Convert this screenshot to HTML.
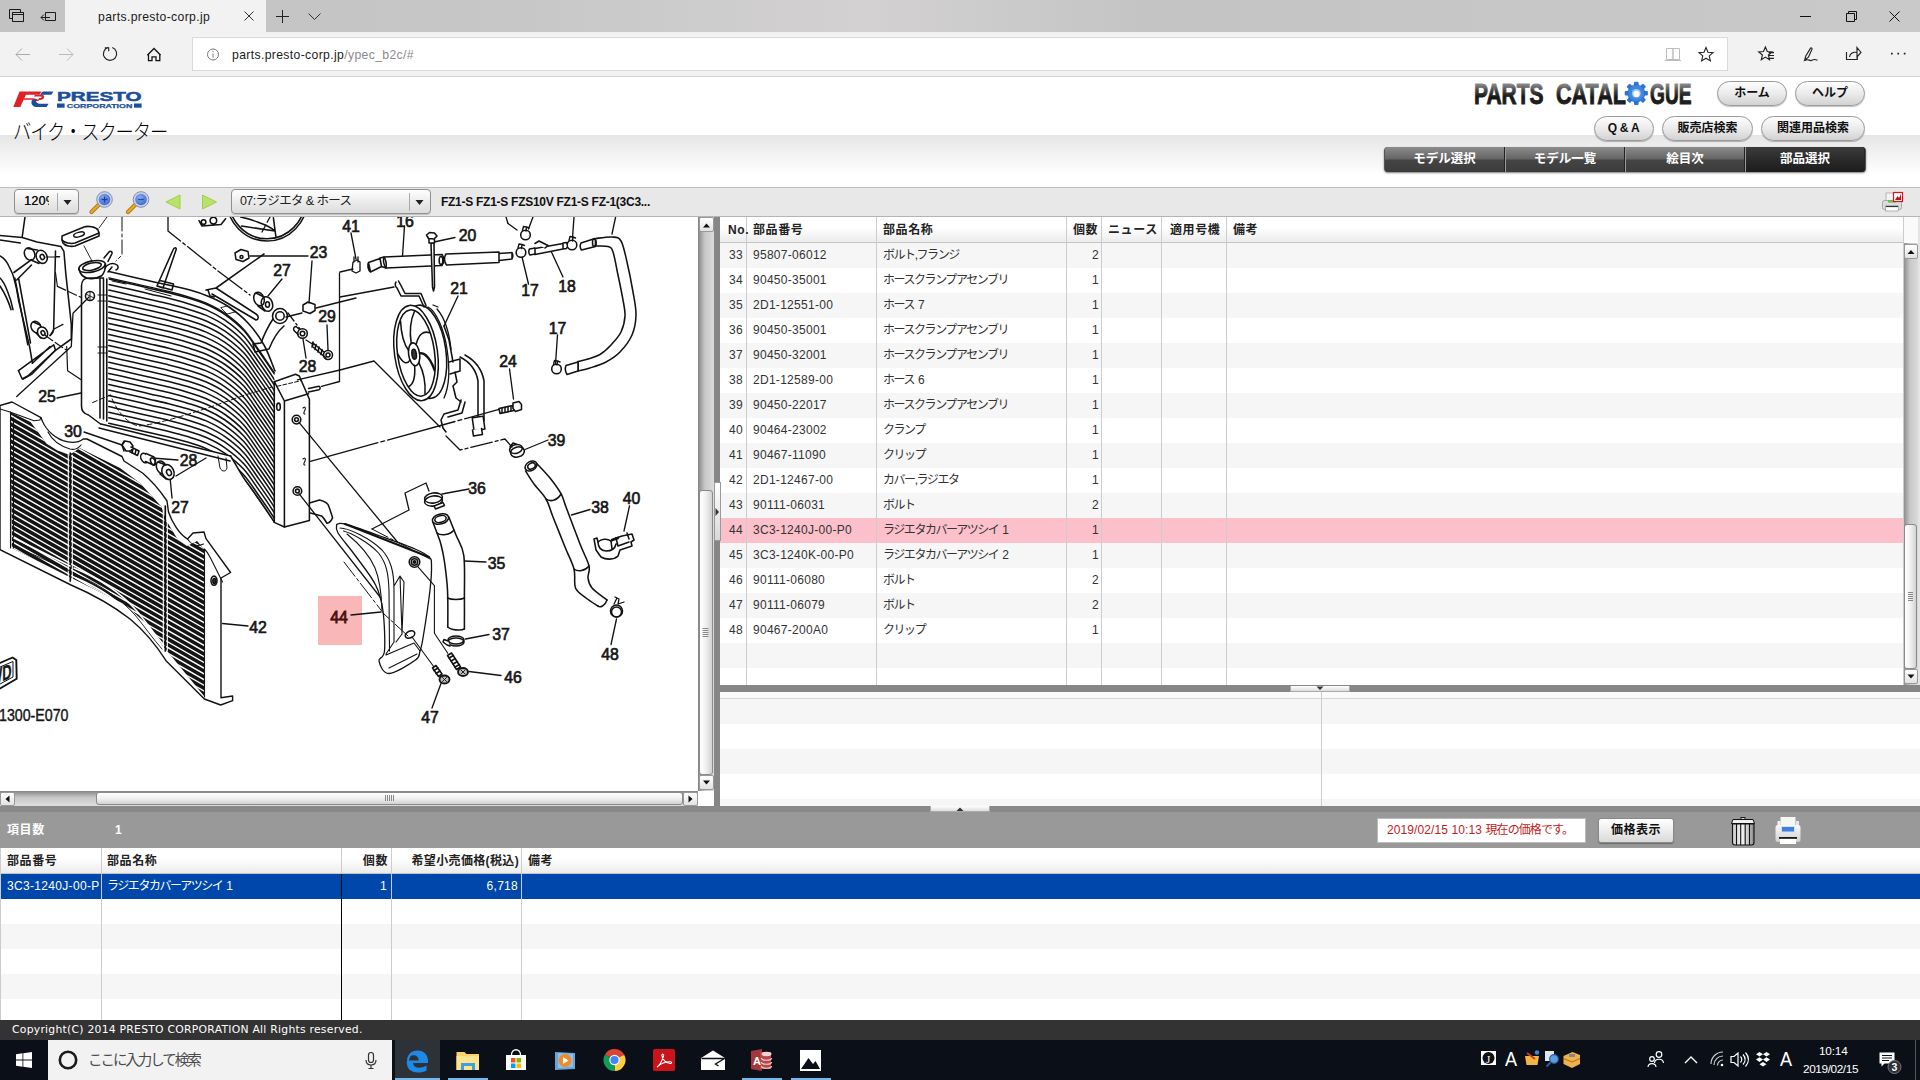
<!DOCTYPE html>
<html lang="ja">
<head>
<meta charset="utf-8">
<title>parts.presto-corp.jp</title>
<style>
*{box-sizing:border-box;margin:0;padding:0}
html,body{width:1920px;height:1080px;overflow:hidden;background:#fff}
body{position:relative;font-family:"Liberation Sans","Noto Sans CJK JP",sans-serif;font-size:12px;color:#222}
.abs{position:absolute}
svg{position:absolute;overflow:visible}
/* browser chrome */
#tabbar{left:0;top:0;width:1920px;height:32px;background:linear-gradient(90deg,#c3c3c3 0,#c6c6c6 25%,#d3d1d1 45%,#c4c4c4 60%,#c9c9c9 100%)}
#tab{left:65px;top:0;width:201px;height:33px;background:#f2f2f2}
#navbar{left:0;top:32px;width:1920px;height:45px;background:#f2f2f2;border-bottom:1px solid #d2d2d2}
#urlbox{left:192px;top:37px;width:1536px;height:34px;background:#fff;border:1px solid #d9d9d9}
.ctext{font-size:12.2px;color:#1a1a1a;white-space:nowrap;letter-spacing:.36px}
/* page header */
#hgrad{left:0;top:135px;width:1920px;height:40px;background:linear-gradient(#e6e6e6,#fff)}
#title{left:13px;top:117px;font-size:21px;letter-spacing:-1.2px;transform:scaleX(.87);transform-origin:0 0;color:#000;white-space:nowrap;font-weight:300;line-height:30px}
.pill{height:25px;border:1px solid #9a9a9a;border-radius:13px;background:linear-gradient(#fdfdfd,#e9e9e9 55%,#d2d2d2);box-shadow:0 1px 1px rgba(0,0,0,.25);font-weight:bold;font-size:12px;text-align:center;line-height:23px;color:#111;white-space:nowrap}
.nav{top:147px;width:120px;height:25px;background:linear-gradient(#8c8c8c,#666 46%,#444 54%,#3c3c3c);color:#fff;font-weight:bold;font-size:12.5px;text-align:center;line-height:25px;border-left:1px solid #999;border-right:1px solid #222}
/* toolbar */
#toolbar{left:0;top:187px;width:1920px;height:30px;background:#e8e8e8;border-top:1px solid #bdbdbd;border-bottom:1px solid #b4b4b4}
.combo{top:189px;height:25px;border:1px solid #8f8f8f;border-radius:4px;background:linear-gradient(#fff,#ececec 50%,#dcdcdc);box-shadow:0 1px 0 rgba(0,0,0,.15);font-size:12.5px;line-height:23px;white-space:nowrap;overflow:hidden;color:#222}
.sbtn{background:linear-gradient(#fff,#e2e2e2);border:1px solid #999;border-radius:2px}
/* grids */
.hdr{background:linear-gradient(#fff,#fff 40%,#ececec);border-bottom:1px solid #c4c4c4;font-weight:bold;color:#222}
.vl{position:absolute;width:1px;background:#ccc}
.t{position:absolute;white-space:nowrap;line-height:25px;height:25px;font-size:12px;letter-spacing:.28px;color:#333}
.k{letter-spacing:-1.45px}
.hb{font-weight:bold;color:#222;letter-spacing:.6px;line-height:26px}
</style>
</head>
<body>
<!-- ============ BROWSER CHROME ============ -->
<div class="abs" id="tabbar"></div>
<div class="abs" id="tab"></div>
<div class="abs" id="navbar"></div>
<div class="abs" id="urlbox"></div>
<div class="abs ctext" style="left:98px;top:10px">parts.presto-corp.jp</div>
<div class="abs ctext" style="left:232px;top:47.500px">parts.presto-corp.jp<span style="color:#8a8a8a">/ypec_b2c/#</span></div>
<svg style="left:0;top:0" width="1920" height="77" viewBox="0 0 1920 77" fill="none" stroke="#1a1a1a" stroke-width="1">
<!-- tab tools -->
<path d="M9.5 9.5h11v9h-11zM12.5 12.5h11v9h-11z" fill="none"/><path d="M12.5 12.5h11v9h-11z" fill="#c5c5c5"/><path d="M12.5 14.5h11"/>
<path d="M45.5 12.5h10v8h-10zM41 17.5h9M44 14.5l-3 3 3 3"/>
<!-- close, plus, chevron -->
<path d="M244.5 11.5l9 9M253.5 11.5l-9 9" stroke="#333"/>
<path d="M282.5 10v13M276 16.500h13" stroke="#222"/>
<path d="M308.500 13.500l6 6 6-6" stroke="#333"/>
<!-- window controls -->
<path d="M1800 16.500h11M1846.500 13.500h8v8h-8zM1848.500 13.500v-2h8v8h-2M1889.500 11.500l10 10M1899.500 11.500l-10 10" stroke="#111"/>
<!-- nav -->
<path d="M16 54.500h14M22 48.500l-6 6 6 6" stroke="#aaa"/>
<path d="M59 54.500h14M67 48.500l6 6-6 6" stroke="#bbb"/>
<path d="M112.260 47.550A6.600 6.600 0 1 1 108.300 47.400M104.800 47.700h3.900v3.600" stroke="#222" stroke-width="1.150"/>
<path d="M147.300 55.200l6.700-6.700 6.700 6.700M148.500 54.500v6.100h3.500v-3.800h4v3.800h3.800v-6.100" stroke="#111" stroke-width="1.300"/>
<circle cx="213" cy="54.500" r="5.500" stroke="#777"/><path d="M213 53.500v4M213 51.200v1" stroke="#777"/>
<!-- reading / fav -->
<path d="M1666.500 48.500h6.500v11h-6.500zM1673 48.500h6.500v11h-6.500zM1665 60.500h16" stroke="#bdbdbd"/>
<path d="M1706 47.500l2 4.700 5 .4-3.800 3.300 1.200 5-4.400-2.700-4.400 2.700 1.200-5-3.800-3.300 5-.4z" stroke="#222" stroke-width="1.100"/>
<path d="M1765.400 47l1.900 4.500 4.800.4-3.700 3.100 1.100 4.700-4.100-2.600-4.100 2.600 1.100-4.700-3.700-3.100 4.800-.4zM1768.500 52.600h5.500M1768.500 55.500h5.500M1768.500 58.400h5.500" stroke="#222" stroke-width="1.150"/>
<path d="M1804.600 60.200l1.200-4.200 4.600-7.600c.6-.9 2-.2 1.600.9l-3.600 7.900zM1805 60.600c3-2.500 4.500.8 6.500-.2s2.500-1.800 6-.2" stroke="#222" stroke-width="1.150"/>
<path d="M1846.500 52v7.500h10.800v-2.500M1849.500 57c.5-3.500 3-5 7.500-5M1857 47.500l4 5-4 4.500z" stroke="#222" stroke-width="1.150"/>
<path d="M1891 53.700h1.700M1897.400 53.700h1.700M1903.800 53.700h1.700" stroke="#222" stroke-width="1.700"/>
</svg>


<!-- ============ PAGE HEADER ============ -->
<div class="abs" id="hgrad"></div>
<svg style="left:0;top:84px" width="160" height="30" viewBox="0 84 160 30">
<path d="M19.500 91.500h22l-2 3.200h-13.500l-1.700 3.600h8.500c3 0 5 .8 6.500 2.600l-3.200 0c-1-.9-2-1.100-3.800-1.100h-8.700l-3.300 7.200h-7z" fill="#e02227"/>
<path d="M35 94.700h6.500c2 0 3 1 2.600 2.600-.4 1.700-1.800 2.700-4 2.700h-2.100l1.200-2h1c.8 0 1.300-.3 1.400-.8.100-.5-.2-.8-1-.8h-6.600z" fill="#e02227"/>
<path d="M43.500 91.500h10l-2.200 3.200h-8.300c-1.500 0-2.700.5-3.600 1.500l2.500-4.200zM36 100.600c0 2 1.400 3.200 4 3.200h8.600l-2 3.200h-8.800c-4.500 0-6.800-2.400-6.300-5.600.1-.6.500-1.400.8-1.800h3.900c-.1.300-.2.700-.2 1z" fill="#1b4f9c"/>
<text x="57" y="100.600" font-family="Liberation Sans,sans-serif" font-weight="bold" font-size="12.300" fill="#1b4f9c" stroke="#1b4f9c" stroke-width=".5" textLength="84.500" lengthAdjust="spacingAndGlyphs">PRESTO</text>
<rect x="57" y="103.500" width="7.600" height="4.200" fill="#1b4f9c"/><rect x="134" y="103.500" width="7.600" height="4.200" fill="#1b4f9c"/>
<text x="66.800" y="107.700" font-family="Liberation Sans,sans-serif" font-weight="bold" font-size="5.800" fill="#1b4f9c" stroke="#1b4f9c" stroke-width=".25" textLength="65.500" lengthAdjust="spacingAndGlyphs">CORPORATION</text>
</svg>

<div class="abs" id="title">バイク・スクーター</div>
<svg style="left:1470px;top:78px" width="230" height="32" viewBox="1470 78 230 32">
<defs><linearGradient id="pcg" x1="0" y1="82" x2="0" y2="104" gradientUnits="userSpaceOnUse"><stop offset="0" stop-color="#a0a0a0"/><stop offset=".4" stop-color="#444"/><stop offset=".7" stop-color="#141414"/><stop offset="1" stop-color="#222"/></linearGradient></defs>
<g font-family="Liberation Sans,sans-serif" font-weight="bold" font-size="29.500" fill="url(#pcg)" stroke="url(#pcg)" stroke-width=".9">
<text x="1474" y="104" textLength="69.500" lengthAdjust="spacingAndGlyphs">PARTS</text>
<text x="1556" y="104" textLength="70" lengthAdjust="spacingAndGlyphs">CATAL</text>
<text x="1650" y="104" textLength="41.500" lengthAdjust="spacingAndGlyphs">GUE</text>
</g>
<g transform="translate(1636.300 93.300)">
<g fill="#2f74d0"><rect x="-2.300" y="-11.600" width="4.600" height="23.200" rx="1"/><rect x="-2.300" y="-11.600" width="4.600" height="23.200" rx="1" transform="rotate(45)"/><rect x="-2.300" y="-11.600" width="4.600" height="23.200" rx="1" transform="rotate(90)"/><rect x="-2.300" y="-11.600" width="4.600" height="23.200" rx="1" transform="rotate(135)"/></g>
<circle r="8.600" fill="#3b86e0"/><circle r="8.600" fill="none" stroke="#1f5fb8" stroke-width=".6"/><circle r="4.300" fill="#fff"/>
<text x="0" y="5.500" text-anchor="middle" font-family="Liberation Sans,sans-serif" font-weight="bold" font-size="15" fill="#5b9cea" fill-opacity=".55">O</text>
</g>
</svg>
<div class="abs pill" style="left:1717px;top:81px;width:70px">ホーム</div>
<div class="abs pill" style="left:1795px;top:81px;width:70px">ヘルプ</div>
<div class="abs pill" style="left:1594px;top:116px;width:60px;letter-spacing:2.600px;text-indent:2px">Q&amp;A</div>
<div class="abs pill" style="left:1662px;top:116px;width:91px">販売店検索</div>
<div class="abs pill" style="left:1761px;top:116px;width:104px">関連用品検索</div>
<div class="abs" style="left:1384px;top:147px;width:482px;height:25px;border-radius:4px;background:#555;box-shadow:0 1px 2px rgba(0,0,0,.5)"></div>
<div class="abs nav" style="left:1385px;border-radius:3px 0 0 3px;border-left:0">モデル選択</div>
<div class="abs nav" style="left:1505px">モデル一覧</div>
<div class="abs nav" style="left:1625px">絵目次</div>
<div class="abs nav" style="left:1745px;border-radius:0 3px 3px 0;background:linear-gradient(#3c3c3c,#2a2a2a 50%,#1c1c1c)">部品選択</div>


<!-- ============ TOOLBAR ============ -->
<div class="abs" id="toolbar"></div>
<div class="abs combo" style="left:14px;width:65px;padding-left:9px;letter-spacing:.3px;color:#111;text-shadow:.3px 0 0 #111"><span style="display:inline-block;width:25px;overflow:hidden;vertical-align:top">120%</span></div>
<div class="abs" style="left:57px;top:193px;width:1px;height:18px;background:#aaa"></div>
<div class="abs combo" style="left:231px;width:200px;padding-left:8px;letter-spacing:-.6px">07:ラジエタ &amp; ホース</div>
<div class="abs" style="left:409px;top:193px;width:1px;height:18px;background:#aaa"></div>
<svg style="left:0;top:187px" width="480" height="30" viewBox="0 187 480 30">
<defs><radialGradient id="lens" cx=".4" cy=".35" r=".7"><stop offset="0" stop-color="#8aaef0"/><stop offset="1" stop-color="#3f66c8"/></radialGradient></defs>
<path d="M63.500 200h8l-4 5z" fill="#222"/><path d="M415.500 200h8l-4 5z" fill="#222"/>
<g id="mag"><path d="M91.500 212l8-8" stroke="#b07a10" stroke-width="4.200" stroke-linecap="round"/><path d="M91.500 212l8-8" stroke="#e8a92c" stroke-width="2.400" stroke-linecap="round"/>
<circle cx="104.500" cy="199.500" r="7.800" fill="#c9d4ea" stroke="#7f8fb5" stroke-width="1"/><circle cx="104.500" cy="199.500" r="5.800" fill="url(#lens)"/></g>
<path d="M101.500 199.500h6M104.500 196.500v6" stroke="#1c3f9e" stroke-width="1.300"/>
<g transform="translate(36.500 0)"><path d="M91.500 212l8-8" stroke="#b07a10" stroke-width="4.200" stroke-linecap="round"/><path d="M91.500 212l8-8" stroke="#e8a92c" stroke-width="2.400" stroke-linecap="round"/>
<circle cx="104.500" cy="199.500" r="7.800" fill="#c9d4ea" stroke="#7f8fb5" stroke-width="1"/><circle cx="104.500" cy="199.500" r="5.800" fill="url(#lens)"/></g>
<path d="M138 199.500h6" stroke="#2a4fb0" stroke-width="1.300"/>
<path d="M166 202l14-7v14z" fill="#b9e26a" stroke="#9fcf4c" stroke-width="1" stroke-linejoin="round"/>
<path d="M216.500 202l-14-7v14z" fill="#b9e26a" stroke="#9fcf4c" stroke-width="1" stroke-linejoin="round"/>
</svg>
<div class="abs" style="left:441px;top:190px;font-size:12px;font-weight:bold;line-height:24px;color:#111;white-space:nowrap;letter-spacing:-.27px">FZ1-S FZ1-S FZS10V FZ1-S FZ-1(3C3...</div>
<svg style="left:1880px;top:190px" width="26" height="24" viewBox="1880 190 26 24">
<rect x="1886" y="193" width="12" height="9" fill="#f4f4f4" stroke="#aaa" stroke-width=".8"/>
<rect x="1882.500" y="200.500" width="19" height="9" rx="2" fill="#dcdcdc" stroke="#999" stroke-width=".8"/>
<rect x="1888" y="200" width="8" height="2.500" fill="#6cc04a"/>
<rect x="1885.500" y="206" width="13" height="5" fill="#fff" stroke="#888" stroke-width=".6"/><path d="M1886 206.500h12" stroke="#333" stroke-width="1.200"/>
<rect x="1893.500" y="192.500" width="9" height="9" fill="#fff" stroke="#e01020" stroke-width="1.200"/><path d="M1895 200l2.500-4 1.500 2 2-4v6z" fill="#c01020"/>
</svg>


<!-- ============ DIAGRAM ============ -->
<!--DG-START-->
<svg style="left:0;top:217px" width="698" height="574" viewBox="0 217 698 574">
<defs><clipPath id="dclip"><rect x="0" y="217" width="698" height="574"/></clipPath>
<clipPath id="core"><path d="M108.8 277.8C112.5 278.6 124.4 281.3 131.3 282.9C138.2 284.5 143.8 285.8 150 287.2C156.2 288.6 162.6 289.9 168.8 291.5C175.1 293.1 181.2 294.7 187.5 296.6C193.8 298.5 200.1 300.3 206.3 303.1C212.6 305.9 218.8 309 225 313.4C231.2 317.8 238.2 323.3 243.8 329.4C249.4 335.5 255 344.7 258.8 350C262.6 355.3 263.9 357.2 266.5 361C269.1 364.8 273.2 371 274.5 373L274.3 523L262.5 506L243.8 479L230.6 456L101 424z"/></clipPath>
<clipPath id="gr"><path d="M10.2 412L30.5 422L37 430.5L46.3 443.5L57.4 450.5L68.5 454.6L73 452.8L79.6 448L120 468L140 483L161.5 506.7L166 520L178 540L187 546L197 541L204 549L204 696L163 646L148 625L124 604L71 577.8L11.9 548z"/></clipPath>
</defs>
<g clip-path="url(#dclip)" fill="none" stroke="#121212" stroke-width="1.55" stroke-linecap="round" stroke-linejoin="round">
<rect x="0" y="217" width="698" height="574" fill="#fff" stroke="none"/>
<rect x="318" y="596" width="44" height="49" fill="#f9b7b7" stroke="none"/>
<g clip-path="url(#core)" stroke-width="1.55"><path d="M108.8 279C112.5 279.9 124.4 282.5 131.3 284.1C138.2 285.7 143.8 287 150 288.4C156.2 289.8 162.6 291.1 168.8 292.7C175.1 294.3 181.2 295.9 187.5 297.8C193.8 299.7 200.1 301.5 206.3 304.3C212.6 307.1 218.8 310.2 225 314.6C231.2 319 238.2 324.5 243.8 330.6C249.4 336.7 255 345.9 258.8 351.2C262.6 356.5 263.9 358.4 266.5 362.2C269.1 366 273.2 372.2 274.5 374.2M108.8 284.6C112.5 285.4 124.4 288.1 131.3 289.6C138.2 291.2 143.8 292.5 150 293.9C156.2 295.4 162.6 296.7 168.8 298.2C175.1 299.8 181.2 301.4 187.5 303.4C193.8 305.3 200.1 307.1 206.3 309.9C212.6 312.7 218.8 315.8 225 320.1C231.2 324.5 238.2 330 243.8 336.1C249.4 342.2 255 351.5 258.8 356.8C262.6 362 263.9 363.9 266.5 367.8C269.1 371.6 273.2 377.8 274.5 379.8M108.8 290.1C112.5 291 124.4 293.6 131.3 295.2C138.2 296.8 143.8 298.1 150 299.5C156.2 300.9 162.6 302.2 168.8 303.8C175.1 305.4 181.2 307 187.5 308.9C193.8 310.8 200.1 312.6 206.3 315.4C212.6 318.2 218.8 321.3 225 325.7C231.2 330.1 238.2 335.6 243.8 341.7C249.4 347.8 255 357 258.8 362.3C262.6 367.6 263.9 369.5 266.5 373.3C269.1 377.1 273.2 383.3 274.5 385.3M108.8 295.7C112.5 296.5 124.4 299.2 131.3 300.8C138.2 302.3 143.8 303.6 150 305.1C156.2 306.5 162.6 307.8 168.8 309.4C175.1 310.9 181.2 312.5 187.5 314.5C193.8 316.4 200.1 318.2 206.3 321C212.6 323.8 218.8 326.9 225 331.2C231.2 335.6 238.2 341.1 243.8 347.2C249.4 353.4 255 362.6 258.8 367.9C262.6 373.1 263.9 375 266.5 378.9C269.1 382.7 273.2 388.9 274.5 390.9M108.8 301.2C112.5 302 124.4 304.7 131.3 306.3C138.2 307.9 143.8 309.2 150 310.6C156.2 312 162.6 313.3 168.8 314.9C175.1 316.5 181.2 318.1 187.5 320C193.8 321.9 200.1 323.7 206.3 326.5C212.6 329.3 218.8 332.4 225 336.8C231.2 341.2 238.2 346.7 243.8 352.8C249.4 358.9 255 368.1 258.8 373.4C262.6 378.7 263.9 380.6 266.5 384.4C269.1 388.2 273.2 394.4 274.5 396.4M108.8 306.8C112.5 307.6 124.4 310.3 131.3 311.8C138.2 313.4 143.8 314.7 150 316.1C156.2 317.6 162.6 318.9 168.8 320.4C175.1 322 181.2 323.6 187.5 325.6C193.8 327.5 200.1 329.2 206.3 332.1C212.6 334.9 218.8 338 225 342.3C231.2 346.7 238.2 352.2 243.8 358.3C249.4 364.4 255 373.7 258.8 378.9C262.6 384.2 263.9 386.1 266.5 389.9C269.1 393.8 273.2 399.9 274.5 401.9M108.8 312.3C112.5 313.1 124.4 315.8 131.3 317.4C138.2 319 143.8 320.3 150 321.7C156.2 323.1 162.6 324.4 168.8 326C175.1 327.6 181.2 329.2 187.5 331.1C193.8 333 200.1 334.8 206.3 337.6C212.6 340.4 218.8 343.5 225 347.9C231.2 352.3 238.2 357.8 243.8 363.9C249.4 370 255 379.2 258.8 384.5C262.6 389.8 263.9 391.7 266.5 395.5C269.1 399.3 273.2 405.5 274.5 407.5M108.8 317.9C112.5 318.7 124.4 321.4 131.3 322.9C138.2 324.5 143.8 325.8 150 327.2C156.2 328.7 162.6 330 168.8 331.6C175.1 333.1 181.2 334.7 187.5 336.7C193.8 338.6 200.1 340.4 206.3 343.2C212.6 346 218.8 349.1 225 353.4C231.2 357.8 238.2 363.3 243.8 369.4C249.4 375.6 255 384.8 258.8 390.1C262.6 395.3 263.9 397.2 266.5 401.1C269.1 404.9 273.2 411.1 274.5 413.1M108.8 323.4C112.5 324.2 124.4 326.9 131.3 328.5C138.2 330.1 143.8 331.4 150 332.8C156.2 334.2 162.6 335.5 168.8 337.1C175.1 338.7 181.2 340.3 187.5 342.2C193.8 344.1 200.1 345.9 206.3 348.7C212.6 351.5 218.8 354.6 225 359C231.2 363.4 238.2 368.9 243.8 375C249.4 381.1 255 390.3 258.8 395.6C262.6 400.9 263.9 402.8 266.5 406.6C269.1 410.4 273.2 416.6 274.5 418.6M108.8 328.9C112.5 329.8 124.4 332.5 131.3 334C138.2 335.6 143.8 336.9 150 338.3C156.2 339.8 162.6 341.1 168.8 342.6C175.1 344.2 181.2 345.8 187.5 347.8C193.8 349.7 200.1 351.4 206.3 354.2C212.6 357.1 218.8 360.2 225 364.5C231.2 368.9 238.2 374.4 243.8 380.5C249.4 386.6 255 395.9 258.8 401.1C262.6 406.4 263.9 408.3 266.5 412.1C269.1 416 273.2 422.1 274.5 424.1M108.8 334.5C112.5 335.4 124.4 338 131.3 339.6C138.2 341.2 143.8 342.5 150 343.9C156.2 345.3 162.6 346.6 168.8 348.2C175.1 349.8 181.2 351.4 187.5 353.3C193.8 355.2 200.1 357 206.3 359.8C212.6 362.6 218.8 365.7 225 370.1C231.2 374.5 238.2 380 243.8 386.1C249.4 392.2 255 401.4 258.8 406.7C262.6 412 263.9 413.9 266.5 417.7C269.1 421.5 273.2 427.7 274.5 429.7M108.8 340.1C112.5 340.9 124.4 343.6 131.3 345.1C138.2 346.7 143.8 348 150 349.4C156.2 350.9 162.6 352.2 168.8 353.8C175.1 355.3 181.2 356.9 187.5 358.9C193.8 360.8 200.1 362.6 206.3 365.4C212.6 368.2 218.8 371.3 225 375.6C231.2 380 238.2 385.5 243.8 391.6C249.4 397.8 255 407 258.8 412.2C262.6 417.5 263.9 419.4 266.5 423.2C269.1 427.1 273.2 433.2 274.5 435.2M108.8 345.6C112.5 346.5 124.4 349.1 131.3 350.7C138.2 352.3 143.8 353.6 150 355C156.2 356.4 162.6 357.7 168.8 359.3C175.1 360.9 181.2 362.5 187.5 364.4C193.8 366.3 200.1 368.1 206.3 370.9C212.6 373.7 218.8 376.8 225 381.2C231.2 385.6 238.2 391.1 243.8 397.2C249.4 403.3 255 412.5 258.8 417.8C262.6 423.1 263.9 425 266.5 428.8C269.1 432.6 273.2 438.8 274.5 440.8M108.8 351.1C112.5 352 124.4 354.7 131.3 356.2C138.2 357.8 143.8 359.1 150 360.5C156.2 362 162.6 363.3 168.8 364.9C175.1 366.4 181.2 368 187.5 370C193.8 371.9 200.1 373.7 206.3 376.5C212.6 379.3 218.8 382.4 225 386.8C231.2 391.1 238.2 396.6 243.8 402.8C249.4 408.9 255 418.1 258.8 423.4C262.6 428.6 263.9 430.5 266.5 434.4C269.1 438.2 273.2 444.4 274.5 446.4M108.8 356.7C112.5 357.6 124.4 360.2 131.3 361.8C138.2 363.4 143.8 364.7 150 366.1C156.2 367.5 162.6 368.8 168.8 370.4C175.1 372 181.2 373.6 187.5 375.5C193.8 377.4 200.1 379.2 206.3 382C212.6 384.8 218.8 387.9 225 392.3C231.2 396.7 238.2 402.2 243.8 408.3C249.4 414.4 255 423.6 258.8 428.9C262.6 434.2 263.9 436.1 266.5 439.9C269.1 443.7 273.2 449.9 274.5 451.9M108.8 362.2C112.5 363.1 124.4 365.8 131.3 367.3C138.2 368.9 143.8 370.2 150 371.6C156.2 373.1 162.6 374.4 168.8 375.9C175.1 377.5 181.2 379.1 187.5 381.1C193.8 383 200.1 384.8 206.3 387.6C212.6 390.4 218.8 393.5 225 397.8C231.2 402.2 238.2 407.7 243.8 413.8C249.4 419.9 255 429.2 258.8 434.4C262.6 439.7 263.9 441.6 266.5 445.4C269.1 449.3 273.2 455.4 274.5 457.4M108.8 367.8C112.5 368.6 124.4 371.3 131.3 372.9C138.2 374.5 143.8 375.8 150 377.2C156.2 378.6 162.6 379.9 168.8 381.5C175.1 383.1 181.2 384.7 187.5 386.6C193.8 388.5 200.1 390.3 206.3 393.1C212.6 395.9 218.8 399 225 403.4C231.2 407.8 238.2 413.3 243.8 419.4C249.4 425.5 255 434.7 258.8 440C262.6 445.3 263.9 447.2 266.5 451C269.1 454.8 273.2 461 274.5 463M108.8 373.4C112.5 374.2 124.4 376.9 131.3 378.4C138.2 380 143.8 381.3 150 382.8C156.2 384.2 162.6 385.5 168.8 387.1C175.1 388.6 181.2 390.2 187.5 392.2C193.8 394.1 200.1 395.9 206.3 398.7C212.6 401.5 218.8 404.6 225 408.9C231.2 413.3 238.2 418.8 243.8 424.9C249.4 431.1 255 440.3 258.8 445.6C262.6 450.8 263.9 452.7 266.5 456.6C269.1 460.4 273.2 466.6 274.5 468.6M108.8 378.9C112.5 379.8 124.4 382.4 131.3 384C138.2 385.6 143.8 386.9 150 388.3C156.2 389.7 162.6 391 168.8 392.6C175.1 394.2 181.2 395.8 187.5 397.7C193.8 399.6 200.1 401.4 206.3 404.2C212.6 407 218.8 410.1 225 414.5C231.2 418.9 238.2 424.4 243.8 430.5C249.4 436.6 255 445.8 258.8 451.1C262.6 456.4 263.9 458.3 266.5 462.1C269.1 465.9 273.2 472.1 274.5 474.1M108.8 384.5C112.5 385.3 124.4 388 131.3 389.5C138.2 391.1 143.8 392.4 150 393.9C156.2 395.3 162.6 396.6 168.8 398.1C175.1 399.7 181.2 401.3 187.5 403.2C193.8 405.2 200.1 406.9 206.3 409.8C212.6 412.6 218.8 415.7 225 420C231.2 424.4 238.2 429.9 243.8 436C249.4 442.1 255 451.4 258.8 456.6C262.6 461.9 263.9 463.8 266.5 467.6C269.1 471.5 273.2 477.6 274.5 479.6M108.8 390C112.5 390.9 124.4 393.5 131.3 395.1C138.2 396.7 143.8 398 150 399.4C156.2 400.8 162.6 402.1 168.8 403.7C175.1 405.3 181.2 406.9 187.5 408.8C193.8 410.7 200.1 412.5 206.3 415.3C212.6 418.1 218.8 421.2 225 425.6C231.2 430 238.2 435.5 243.8 441.6C249.4 447.7 255 456.9 258.8 462.2C262.6 467.5 263.9 469.4 266.5 473.2C269.1 477 273.2 483.2 274.5 485.2M108.8 395.6C112.5 396.4 124.4 399.1 131.3 400.6C138.2 402.2 143.8 403.5 150 404.9C156.2 406.4 162.6 407.7 168.8 409.2C175.1 410.8 181.2 412.4 187.5 414.4C193.8 416.3 200.1 418.1 206.3 420.9C212.6 423.7 218.8 426.8 225 431.1C231.2 435.5 238.2 441 243.8 447.1C249.4 453.2 255 462.5 258.8 467.8C262.6 473 263.9 474.9 266.5 478.8C269.1 482.6 273.2 488.8 274.5 490.8M108.8 401.1C112.5 402 124.4 404.6 131.3 406.2C138.2 407.8 143.8 409.1 150 410.5C156.2 411.9 162.6 413.2 168.8 414.8C175.1 416.4 181.2 418 187.5 419.9C193.8 421.8 200.1 423.6 206.3 426.4C212.6 429.2 218.8 432.3 225 436.7C231.2 441.1 238.2 446.6 243.8 452.7C249.4 458.8 255 468 258.8 473.3C262.6 478.6 263.9 480.5 266.5 484.3C269.1 488.1 273.2 494.3 274.5 496.3M108.8 406.6C112.5 407.5 124.4 410.2 131.3 411.8C138.2 413.3 143.8 414.6 150 416C156.2 417.5 162.6 418.8 168.8 420.4C175.1 421.9 181.2 423.5 187.5 425.5C193.8 427.4 200.1 429.2 206.3 432C212.6 434.8 218.8 437.9 225 442.2C231.2 446.6 238.2 452.1 243.8 458.2C249.4 464.4 255 473.6 258.8 478.9C262.6 484.1 263.9 486 266.5 489.9C269.1 493.7 273.2 499.9 274.5 501.9M108.8 412.2C112.5 413 124.4 415.7 131.3 417.3C138.2 418.9 143.8 420.2 150 421.6C156.2 423 162.6 424.3 168.8 425.9C175.1 427.5 181.2 429.1 187.5 431C193.8 432.9 200.1 434.7 206.3 437.5C212.6 440.3 218.8 443.4 225 447.8C231.2 452.2 238.2 457.7 243.8 463.8C249.4 469.9 255 479.1 258.8 484.4C262.6 489.7 263.9 491.6 266.5 495.4C269.1 499.2 273.2 505.4 274.5 507.4M108.8 417.8C112.5 418.6 124.4 421.3 131.3 422.8C138.2 424.4 143.8 425.7 150 427.1C156.2 428.6 162.6 429.9 168.8 431.4C175.1 433 181.2 434.6 187.5 436.6C193.8 438.5 200.1 440.2 206.3 443.1C212.6 445.9 218.8 449 225 453.3C231.2 457.7 238.2 463.2 243.8 469.3C249.4 475.4 255 484.7 258.8 489.9C262.6 495.2 263.9 497.1 266.5 500.9C269.1 504.8 273.2 511 274.5 513M108.8 423.3C112.5 424.1 124.4 426.8 131.3 428.4C138.2 430 143.8 431.3 150 432.7C156.2 434.1 162.6 435.4 168.8 437C175.1 438.6 181.2 440.2 187.5 442.1C193.8 444 200.1 445.8 206.3 448.6C212.6 451.4 218.8 454.5 225 458.9C231.2 463.3 238.2 468.8 243.8 474.9C249.4 481 255 490.2 258.8 495.5C262.6 500.8 263.9 502.7 266.5 506.5C269.1 510.3 273.2 516.5 274.5 518.5M108.8 428.9C112.5 429.7 124.4 432.4 131.3 433.9C138.2 435.5 143.8 436.8 150 438.2C156.2 439.7 162.6 441 168.8 442.5C175.1 444.1 181.2 445.7 187.5 447.6C193.8 449.6 200.1 451.3 206.3 454.1C212.6 456.9 218.8 460.1 225 464.4C231.2 468.8 238.2 474.3 243.8 480.4C249.4 486.5 255 495.8 258.8 501C262.6 506.3 263.9 508.2 266.5 512C269.1 515.9 273.2 522 274.5 524"/></g>
<path d="M108.8 277.8C112.5 278.6 124.4 281.3 131.3 282.9C138.2 284.5 143.8 285.8 150 287.2C156.2 288.6 162.6 289.9 168.8 291.5C175.1 293.1 181.2 294.7 187.5 296.6C193.8 298.5 200.1 300.3 206.3 303.1C212.6 305.9 218.8 309 225 313.4C231.2 317.8 238.2 323.3 243.8 329.4C249.4 335.5 255 344.7 258.8 350C262.6 355.3 263.9 357.2 266.5 361C269.1 364.8 273.2 371 274.5 373" stroke-width="1.3"/>
<path d="M109 271.5C115.8 273.1 136.5 277.9 150 281C163.5 284.1 180 287.3 190 290C200 292.7 203.5 294.2 210 297C216.5 299.8 222.7 302.7 229 307C235.3 311.3 242.2 316.7 248 323C253.8 329.3 259.5 337 264 345C268.5 353 273.2 366.7 275 371"/>
<path d="M81.5 286c0-5 3-8 7-8h15M81.5 286v120c0 5 3 8 7 9l12 9M100 278v140M103.5 279v140M106.8 279v142"/>
<path d="M101 424l129.6 32M99 428l131 33"/>
<circle cx="90" cy="296" r="4.5"/><path d="M86 294l8 4M90 291.5v9" stroke-width=".9"/>
<path d="M98 295h9M98 301h9M98 347h9M98 353h9" stroke-width=".9"/>
<path d="M274.3 381.7L295.6 374.3L299.3 376L309.4 399.3V520.5L284.4 527L274.3 522.4z" fill="#fff"/><path d="M284.4 401V527M274.3 381.7L284.4 401L308.5 393.7"/>
<path d="M277 386.3L301 380.7" stroke-dasharray="4 2" stroke-width="1"/>
<ellipse cx="278.5" cy="406.7" rx="1.8" ry="3.6"/><circle cx="296.5" cy="419.6" r="4.3"/><circle cx="296.5" cy="419.6" r="1.9"/><circle cx="297.4" cy="491" r="4.3"/><circle cx="297.4" cy="491" r="1.9"/>
<path d="M303 408c2-2 3 0 2 2s-2 4 0 4M303 459c2-2 3 0 2 2s-2 4 0 4" stroke-width="1.1"/>
<path d="M308.5 388.5l10.5-2.3c1.5.5 1.5 3 0 3.5l-10.5 2.3" fill="#fff"/>
<path d="M309.4 503L319.6 500C324 501 328 503 329 506.7L332.6 517.8C331 521 329 523 327 523.3C325 520 323 517 321.5 516L310.4 513"/>
<path d="M230.6 456c4 6 10 18 16 26s16 22 27.7 40"/>
<ellipse cx="92" cy="266.5" rx="13.5" ry="5.5" transform="rotate(-12 92 266.5)"/><ellipse cx="92" cy="266.5" rx="9.5" ry="3.5" transform="rotate(-12 92 266.5)"/>
<path d="M79 269c1 5 4 8 8 9M105.5 264c0 5-1 9-4 12M84 277c4 3 12 2 17-1"/>
<path d="M62 236l22-9c4-1.5 12 0 14 3l1 3-24 10c-4 1-11 0-13-3z"/><ellipse cx="79" cy="234.5" rx="5.5" ry="2.2" transform="rotate(-15 79 234.5)"/><path d="M62 240l1 3c2 3 8 4 12 3l24-10v-3"/>
<path d="M84 246l8 15M99 228l8-11" stroke-width=".9"/>
<path d="M104 258l5-6c1-1.5 3.5-.5 3 1.5l-4 8M105 268c2-4 8-6 12-3 2 2 1 4-1 5M108 272l4-5"/>
<path d="M122 217v38l-6 6" stroke-dasharray="14 3 3 3" stroke-width="1"/>
<path d="M157 286l16-36c1-3 4-3 3 0l-13 38zM157 286l15 4 1.5-6-13.5-3.5" />
<path d="M112 281l14 3M145 289l26 7" stroke-width="1"/>
<path d="M206 290l10-2 40 26c3 2 3 5 0 6l-44-26M208 290l2 6 4 1M216 288l48-34"/>
<path d="M221 308l6 6 8-2-7-6z" stroke-width=".9"/>
<circle cx="280" cy="316" r="7.5"/><circle cx="280" cy="316" r="4.2"/><path d="M273 319c-4 6-9 16-12 24l-8 1 2 8 14-3c4-10 9-18 15-23"/>
<path d="M25 217l-2.8 20M0 235.5l22.2 1.9 14.8 4.6 24 4.6 2.9 4.7 1.8 21.3 5.6 51.8v14.6l-15.8 11.3-27.7 25.7-5.6 3-3.7-8.3"/>
<path d="M0 240l20.4 3M55.5 251l-1.8 77c0 3-1.5 6-3.7 7.5M55.5 256.8h4"/>
<path d="M0 256c4 2 7 6 9.3 11 2 4 3.6 7 4.6 11 2 7 3.5 14 4.6 22l11.1 46.6 2.8 16.4M0 278c3 3 5.5 8 7.4 13 2.5 6 4.3 12 5.6 18.6M0 286c4 6 8 14 11 23.6"/>
<path d="M13.9 272.5l17.6-12.9M16.7 280l14.8-15M14.8 278l13 66.8M18.5 278l12 65"/>
<path d="M18.5 370.7l35.2-25.9 1.8 5.5-24 24.1-8.5 4.6M32.4 363.3l17.6-16.7"/>
<ellipse cx="29.6" cy="254" rx="5" ry="6.5" transform="rotate(-25 29.6 254)"/><path d="M27 248.5l10.5 1.5M31 260l8 3.5"/><ellipse cx="41.7" cy="256.8" rx="5.3" ry="6.8" transform="rotate(-25 41.7 256.8)" fill="#fff"/><ellipse cx="42.3" cy="257" rx="2" ry="2.6" transform="rotate(-25 42.3 257)"/>
<ellipse cx="36" cy="327" rx="4.8" ry="6" transform="rotate(-30 36 327)"/><path d="M33.5 322l6.5 3M36 333l5 5"/><ellipse cx="42.6" cy="332.7" rx="4.8" ry="6" transform="rotate(-30 42.6 332.7)" fill="#fff"/><ellipse cx="43" cy="333" rx="1.8" ry="2.4" transform="rotate(-30 43 333)"/>
<path d="M46 257h9M55.5 272.6l1.9 13.8" stroke-width="1.1"/>
<path d="M57.4 286.4l24.1 11.1M45.4 335.5l15.6 11.1 6 3.7" stroke-dasharray="9 3" stroke-width="1.2"/>
<path d="M89 297l-16 16.3-1.7 33.3-54.6 50" stroke-width="1.3"/>
<path d="M66.7 346.6l.9 24.1 13.9 9.3" stroke-width="1.2"/>
<path d="M50 335.5l4-6.5 9-4.6" stroke-width="1.2"/>
<path d="M235 253l6-3.5 7 2 1 6.5-6 3.5-7-2z"/><circle cx="241.5" cy="257" r="1.5"/>
<path d="M303 305l5-3 7 2.5 0 6-5 3-7-2.5z"/>
<ellipse cx="259" cy="299" rx="5" ry="7" transform="rotate(-20 259 299)"/><ellipse cx="267" cy="304" rx="5.5" ry="7.5" transform="rotate(-20 267 304)"/><ellipse cx="267.5" cy="304.5" rx="2" ry="2.8"/><path d="M256 293l8 4M258 306l7 5"/>
<circle cx="302.5" cy="333.5" r="4.8"/><circle cx="302.5" cy="333.5" r="2.3"/><path d="M299 329l-3-2.5c-2 0-3 2-2 4l4 4"/>
<circle cx="328" cy="355" r="4.5"/><circle cx="328" cy="355" r="2"/><path d="M324 352l-11-9M326 358l-13-11" /><path d="M313 342l-1 5M316 344.5l-1 5M319 347l-1 5M322 349.5l-1 5" stroke-width="1.6"/>
<ellipse cx="267" cy="199" rx="40.5" ry="42"/><ellipse cx="267" cy="199" rx="38.3" ry="39.8"/><path d="M241.5 226L275 231M273.4 217.8L276 237.5M240.6 217c4 1 9 2 13 3.6 8 3 16 5 21.4 10.4M199 220.6l3 5.4 19-1.6 4.6-5.7M203.6 222m-2.3 0a2.3 2.3 0 1 0 4.6 0a2.3 2.3 0 1 0-4.6 0M213.4 220.6m-3.3 0a3.3 3.3 0 1 0 6.6 0a3.3 3.3 0 1 0-6.6 0"/>
<path d="M353 262l4-2 3 2v9l-4 2-4-2zM354 262v-5M358 262v-5" stroke-width="1.3"/>
<g stroke-width="1.3">
<path d="M168 217v14l50 40 32 24" stroke-dasharray="30 3 3 3"/>
<path d="M262 232l8-15" stroke-dasharray="8 3"/>
<path d="M286 317l16-4M316 308l40-10" />
<path d="M340 272l13-3M339.5 273v108.5l-18 4.8" />
<path d="M297.4 379.8L340 370" />
<path d="M288 313l12 16M306 340l8 5" stroke-dasharray="10 3 2 3"/>
<path d="M340 370l34-9 66 66" />
<path d="M446 436l14 14 45-11 7 8" stroke-dasharray="22 3 3 3"/>
<path d="M340 297l54-10" />
<path d="M299 422.4L411 558.5" />
<path d="M299 493.7L384 602" />
<path d="M372 529l37-19-4-17 21-10 3 8" />
<path d="M310.4 461.3L499 409.4" stroke-dasharray="70 3 4 3"/>
<path d="M92.6 402.6L110.7 394.8C113 404 125 424 139 426C160 424 200 411 245.6 394.8L271.5 387" stroke-dasharray="5 3" stroke-width="1"/>
</g>
<g stroke-width="1.35">
<path d="M351 233L356 259"/>
<path d="M404.5 226L402.5 256"/>
<path d="M455 237.5L434 242"/>
<path d="M458 296L444 326"/>
<path d="M528.5 284L522 257"/>
<path d="M563 277L551 251"/>
<path d="M557.5 335L555.5 364"/>
<path d="M509.5 369L513.5 399"/>
<path d="M574 217L572.5 238"/>
<path d="M615.6 217L612 234"/>
<path d="M308 256L250 256"/>
<path d="M312 261L309 303"/>
<path d="M282 279L268 296"/>
<path d="M327 325L328 350"/>
<path d="M306 358L303 339"/>
<path d="M57 398L81 393"/>
<path d="M84 432L122 445"/>
<path d="M178 460L152 458"/>
<path d="M172 498L170 477"/>
<path d="M176 476L206 458"/>
<path d="M548 440L525 449.5"/>
<path d="M469 489L442 494"/>
<path d="M590 509.5L571.5 515"/>
<path d="M629.5 506L624 531"/>
<path d="M486 562L464.5 561"/>
<path d="M351 615L381 612"/>
<path d="M489 634.5L465.5 639"/>
<path d="M501 675.5L469 671.5"/>
<path d="M432 708L441 683.5"/>
<path d="M611 644.5L616.5 619"/>
<path d="M222.5 623.5L248 626"/>
<path d="M506 217L508 223.5"/>
<path d="M508 223.5L517 230"/>
<path d="M533 217L528.5 229"/>
</g>
<path d="M368.5 262.5l11.5-4 1.5 8-11 5.5zM368.5 262.5c-1.5 2-.5 8 2 9.5" fill="#fff"/>
<path d="M384 257l58-2.5c2.5 3 2.5 8 0 11l-56 2.5c-2.5-3-3-8-2-11z" fill="#fff"/><path d="M380 258l4-1M381.5 266.5l4.5 1.5M384 257c2 3 2.5 8 2 11"/>
<path d="M446 254l53-2v10.5l-52.5 2.5c-2.5-3-2.5-8-.5-11zM499 253.5l13-1v6.5l-13 1.5M512 252.5c1 2 1 4.5 0 6.5" fill="#fff"/>
<ellipse cx="441" cy="260.5" rx="1.8" ry="4"/>
<path d="M431 243l1.5 44 1 4 1-4-.5-44z" fill="#fff"/><path d="M426.5 235l3-2.5 5 .5 2.5 3-3 3-5.5-.5zM429 239v4h5.5v-3.5" fill="#fff"/>
<circle cx="521" cy="252.5" r="4.8" fill="#fff"/><path d="M518 248l1-4 3 .5-.5 4M522 244.5l2.5 1" stroke-width="1.4"/>
<circle cx="525.5" cy="235" r="4.8" fill="#fff"/><path d="M522.5 230.5l1-4 3 .5-.5 4M526.5 227l2.5 1" stroke-width="1.4"/>
<circle cx="572" cy="245" r="4.8" fill="#fff"/><path d="M569 240.5l1-4 3 .5-.5 4M573 237l2.5 1" stroke-width="1.4"/>
<circle cx="556.5" cy="369" r="4.8" fill="#fff"/><path d="M553.5 364.5l1-4 3 .5-.5 4M557.5 361l2.5 1" stroke-width="1.4"/>
<path d="M529.5 249l5.5-1v6l-5 1c-1.5-1.5-1.5-4.5-.500-6zM535 248.5l28-5v5.5l-28 5.5M563 243l3.5-.5c1 1.5 1 4.5 0 6l-3.5.500" fill="#fff"/><path d="M535 243.5l4-2.5 9 4.5-3 2.5" fill="#fff"/>
<path d="M596 238.5C598.7 238.2 607.8 236.6 612 237C616.2 237.4 618.5 236.8 621 241C623.5 245.2 625 253.5 627 262C629 270.5 631.5 283.2 633 292C634.5 300.8 636.2 307.8 636 315C635.8 322.2 634.7 328.8 632 335C629.3 341.2 624.3 347.5 620 352C615.7 356.5 611 359.3 606 362C601 364.7 594.7 366.5 590 368C585.3 369.5 580 370.5 578 371L578 361.5" />
<path d="M596 246C598 246.1 605.2 245.5 608 246.5C610.8 247.5 611.3 247.2 613 252C614.7 256.8 616.3 267 618 275C619.7 283 621.8 293.2 623 300C624.2 306.8 625.3 310.7 625 316C624.7 321.3 623.3 327.2 621 332C618.7 336.8 614.5 341.2 611 345C607.5 348.8 603.8 352.2 600 354.5C596.2 356.8 591.7 357.8 588 359C584.3 360.2 579.7 361.1 578 361.5"/>
<path d="M581 243l14-4.5c1.5 2 1.5 6 .5 8l-14 3.5c-1.5-2-1.5-5-.5-7z" fill="#fff"/><ellipse cx="594" cy="242.5" rx="1.5" ry="3.8"/>
<path d="M566 365.5l12-3.5v9l-11 3.5c-1.5-2.5-2-6.5-1-9z" fill="#fff"/>
<g transform="rotate(-8 416 353)">
<ellipse cx="425" cy="353" rx="21" ry="47" fill="#fff"/>
<ellipse cx="416" cy="353" rx="21.5" ry="48" fill="#fff" stroke-width="1.5"/><ellipse cx="416" cy="353" rx="18.5" ry="43.5"/>
<ellipse cx="414" cy="354" rx="5.5" ry="11.5"/><ellipse cx="414" cy="354" rx="2.2" ry="5" fill="#333"/>
<path d="M419.5 354Q428 355 431.8 373.4"/>
<path d="M417.5 362.9Q422.7 377.7 419.2 394.8"/>
<path d="M412.9 365.2Q411.7 382.5 404.3 385.2"/>
<path d="M409.1 359.2Q403.1 365.8 398 351.8"/>
<path d="M409 349.3Q403.4 339.9 405.1 319.2"/>
<path d="M412.6 342.9Q412.3 324.2 420.2 311.7"/>
<path d="M417.2 344.7Q423.2 330.1 432.3 334.8"/>
<path d="M419.5 353.4Q428 353.4 432.2 371.4"/>
</g>
<path d="M428 307c8 4 16 22 19 42 3 20 2 38-3 49M433 305l5 2M437 309c7 8 12 22 14 40" stroke-width="1.3"/>
<path d="M444 326l5 14 4 22M449 362l11-3v12l-10 3M455 372l2 10-4 4 3 12 5 4" />
<path d="M396 282c-1.5 2-.5 5 1 6l4 8h18l5 11M398.5 281l3 5.5 3.5 7h16l5 12" />
<path d="M460 357c8 4 16 12 18 24v40M465 355c9 5 17 14 19 26v40"/>
<path d="M461 400l-3 10-14 4-3 6 2 8 3 4M465 402l-3 11-14 4" />
<rect x="473" y="417" width="11" height="13" fill="#fff" transform="rotate(-8 478 423)"/><path d="M472.5 430l1 6 9-1.5-1-6" fill="#fff"/>
<path d="M499 408.5l14-3 1 5-14 3z" fill="#fff"/><path d="M502 408v5M505 407.3v5M508 406.6v5M511 406v5" stroke-width="1.5"/><path d="M513 403l6-1.5 2.5 3v5l-6 2-2.5-3z" fill="#fff"/>
<ellipse cx="517.5" cy="452" rx="7" ry="5" transform="rotate(-15 517.5 452)" fill="#fff"/><ellipse cx="516" cy="449" rx="6.5" ry="4.3" transform="rotate(-15 516 449)"/><path d="M510 447l3-4 3 1"/>
<ellipse cx="433.5" cy="498" rx="9" ry="5" transform="rotate(-8 433.5 498)" fill="#fff"/><ellipse cx="433.5" cy="501" rx="9" ry="5" transform="rotate(-8 433.5 501)"/><path d="M434 506l9-3.5 1.5 3-9 3.5z" fill="#fff"/>
<ellipse cx="456" cy="640" rx="8" ry="4" fill="#fff"/><ellipse cx="456" cy="642" rx="8" ry="4"/><path d="M448 641l-4-1.5-1 2.5 4 3 3 1" fill="#fff"/>
<circle cx="616.5" cy="611" r="6" fill="#fff"/><circle cx="616.5" cy="612" r="5"/><path d="M614 604l3-6 2 1-1 5 6-2M617 598l-2-1" stroke-width="1.3"/>
<path d="M525.6 471C527 473.2 530.6 479.3 534 484C537.4 488.7 542.8 493.5 546 499C549.2 504.5 549.8 509 553 517C556.2 525 561.5 538.3 565 547C568.5 555.7 572.2 562.2 574 569C575.8 575.8 573.5 583.2 575.5 588C577.5 592.8 582.2 595 586 598C589.8 601 596 604.7 598 606"/><path d="M537 463.7C539.2 466.1 546 473 550 478C554 483 558.3 488.9 561 493.7C563.7 498.5 562.8 498.6 566 507C569.2 515.4 576.2 534.2 580 544C583.8 553.8 587.7 560.3 589 566C590.3 571.7 587.5 574.3 588 578C588.5 581.7 588.8 584.3 592 588C595.2 591.7 604.5 598 607 600"/>
<ellipse cx="531" cy="466" rx="6.3" ry="4.5" transform="rotate(-30 531 466)" fill="#fff"/><ellipse cx="531.5" cy="466" rx="4" ry="2.8" transform="rotate(-30 531.5 466)"/>
<path d="M546 499c4 3 11 2 15-5M574 569c4 3 11 2 15-3M598 606c2 2 7 0 9-6"/>
<path d="M432.8 522C433.5 523.8 435.6 529.2 437 533C438.4 536.8 439.8 539.7 441 544.5C442.2 549.3 443.4 554.4 444.5 562C445.6 569.6 446.9 579.2 447.5 590C448.1 600.8 447.8 620.8 447.8 627"/><path d="M448.8 517C450 520 453.5 528.6 456 535C458.5 541.4 462.4 545.1 463.8 555.6C465.2 566.1 464.3 585.8 464.4 598C464.5 610.2 464.4 623.8 464.4 629"/><path d="M447.8 627c3 3 13 4 16.6 2M447.5 598c4 2 13 2 17 0M437 533c4 3 13 2 17-3"/>
<ellipse cx="440.5" cy="519" rx="8.3" ry="5" transform="rotate(-15 440.5 519)" fill="#fff"/><ellipse cx="440.5" cy="519" rx="5.8" ry="3.3" transform="rotate(-15 440.5 519)"/>
<path d="M594 539l3-1 1 4c3-3 9-4 13-1l5-3 6-2 10-2 2 6-3 2 1 4-12 4-2 6c-4 4-12 4-17 1l-5-7z" fill="#fff"/><path d="M598 542c0 5 3 9 8 9s9-2 10-7M611 541l1 8M616 538l2 8 11-4M627 533l2 6" /><path d="M612 540l6-2" stroke-width="2.4"/>
<path d="M336.7 524.5C338.1 524.4 337.8 522.1 345 524C352.2 525.9 368.3 531.8 380 536C391.7 540.2 406.8 545.5 415 549C423.2 552.5 426.2 554.3 429 557C431.8 559.7 431.3 559.5 431.5 565C431.7 570.5 431.4 577.8 430 590C428.6 602.2 424.7 627.8 423 638C421.3 648.2 421.2 647.3 420 651C418.8 654.7 420.7 656.2 415.5 660C410.3 663.8 395.1 673.3 389 673.5C382.9 673.7 379.8 664.8 379 661C378.2 657.2 383.8 659.3 384.5 651C385.2 642.7 384.5 622 383 611C381.5 600 380.2 594.2 375.6 585C371 575.8 361.9 564.7 355.6 556C349.3 547.3 341.1 538.2 338 533C334.9 527.8 336.9 525.9 336.7 524.5" fill="#fff" stroke-width="1.3"/>
<path d="M340 528c8 0 30 10 42 22 9 10 12 22 12 40v52l-8 12M343.5 531c8 2 26 12 35 22 8 10 10 21 10.5 38l.5 60M347 534c10 8 22 20 28 34 5 12 6.5 28 7 42M394 586l6-10 4 6-2 52-6 8M400 576l2 58M386 655l28-12 6 8M389 668l28-14" stroke-width="1.1"/>
<path d="M345 524l84 33" stroke-width="2"/>
<circle cx="414.5" cy="562" r="5.3" fill="#fff"/><circle cx="414.5" cy="562" r="3.2"/><circle cx="414.5" cy="562" r="1.2" fill="#222"/>
<ellipse cx="410" cy="634.5" rx="5" ry="3.3" transform="rotate(-25 410 634.5)" fill="#fff"/>
<path d="M417.8 566.7l16.6 19v47.6l13.4 20M412 637l22 30" stroke-width="1.1"/>
<path d="M372 529l58 30M344 562l40 52 24 22" stroke-dasharray="18 3 3 3" stroke-width="1"/>
<path d="M447.5 655.5l4-2.5 9 14-4 2.5z" fill="#fff"/><path d="M449 658l4.5-2.5M451 661l4.5-2.5M453 664l4.5-2.5M455 667l4.5-2.5" stroke-width="1.5"/><ellipse cx="463" cy="672" rx="5" ry="4" fill="#bbb" stroke-width="1.8"/><path d="M461 670l4 4M465 670l-4 4" stroke-width=".9"/>
<path d="M432.5 668l3.5-2.5 6 8.5-3.5 2.5z" fill="#fff"/><path d="M434 670.5l4-2.5M436 673.5l4-2.5" stroke-width="1.5"/><ellipse cx="444.5" cy="679.5" rx="5" ry="4" fill="#bbb" stroke-width="1.8"/><path d="M442.5 677.5l4 4M446.5 677.5l-4 4" stroke-width=".9"/>
<path d="M122 445l3-4 5 1 3 4-2 5-5 0zM131 447l8 4-1.5 4.5-8-4" fill="#fff"/><path d="M124 441l-2 4 2 6M133 449l-1 4M136 450l-1 4" stroke-width="1.5"/>
<ellipse cx="144.5" cy="458" rx="3.5" ry="5" transform="rotate(-25 144.5 458)" fill="#fff"/><path d="M146 453.5l8 3.5c2 2 2 6-.5 8l-8-3.5" fill="#fff"/><ellipse cx="153" cy="461.5" rx="2.2" ry="3.8" transform="rotate(-25 153 461.5)"/>
<ellipse cx="161.5" cy="467.5" rx="4.8" ry="6.8" transform="rotate(-25 161.5 467.5)" fill="#fff"/><ellipse cx="168" cy="472" rx="5.8" ry="7.8" transform="rotate(-25 168 472)" fill="#fff"/><ellipse cx="169" cy="472.5" rx="2.3" ry="3.2" transform="rotate(-25 169 472.5)"/><path d="M158 462l8 3M160 474l6 5"/>
<path d="M218 456l2 12c2 4 6 4 7 0l-1-10" stroke-width="1"/>
<path d="M0 405.5L12 402L41 417.6C44 427 52 436 63 440.7C70 443 78 443 83.3 439L87 439L122 456.5L124 461L142.5 473C152 481 161 492 167 501L168.5 512C172 522 179 534 187.5 539L193 533L204 532L206 538.7L230.6 572.5L221 578V697.8L232.6 696V700.7L220.7 705L204.4 699L166 660.7C158 648 146 632 130 619C112 605 92 594 71 585L0 549.6z" fill="#fff" stroke-width="1.4"/>
<path d="M0 409L10 412L34 420.8L39.8 420L41 417.6" stroke-width="1.1"/>
<path d="M10.2 412L30.5 422L37 430.5L46.3 443.5L57.4 450.5L68.5 454.6L73 452.8L79.6 448L120 468L140 483L161.5 506.7L166 520L178 540L187 546L197 541L204 549L204 696L163 646L148 625L124 604L71 577.8L11.9 548z" fill="#141414" stroke="none"/>
<g clip-path="url(#gr)"><path d="M0 341L230 472.1M0 346.7L230 477.8M0 352.4L230 483.5M0 358.1L230 489.2M0 363.8L230 494.9M0 369.5L230 500.6M0 375.2L230 506.3M0 380.9L230 512M0 386.6L230 517.7M0 392.3L230 523.4M0 398L230 529.1M0 403.7L230 534.8M0 409.4L230 540.5M0 415.1L230 546.2M0 420.8L230 551.9M0 426.5L230 557.6M0 432.2L230 563.3M0 437.9L230 569M0 443.6L230 574.7M0 449.3L230 580.4M0 455L230 586.1M0 460.7L230 591.8M0 466.4L230 597.5M0 472.1L230 603.2M0 477.8L230 608.9M0 483.5L230 614.6M0 489.2L230 620.3M0 494.9L230 626M0 500.6L230 631.7M0 506.3L230 637.4M0 512L230 643.1M0 517.7L230 648.8M0 523.4L230 654.5M0 529.1L230 660.2M0 534.8L230 665.9M0 540.5L230 671.6M0 546.2L230 677.3M0 551.9L230 683M0 557.6L230 688.7M0 563.3L230 694.4M0 569L230 700.1M0 574.7L230 705.8M0 580.4L230 711.5M0 586.1L230 717.2M0 591.8L230 722.9M0 597.5L230 728.6M0 603.2L230 734.3M0 608.9L230 740M0 614.6L230 745.7M0 620.3L230 751.4M0 626L230 757.1M0 631.7L230 762.8M0 637.4L230 768.5M0 643.1L230 774.2M0 648.8L230 779.9M0 654.5L230 785.6M0 660.2L230 791.3M0 665.9L230 797M0 671.6L230 802.7M0 677.3L230 808.4M0 683L230 814.1M0 688.7L230 819.8M0 694.4L230 825.5M0 700.1L230 831.2M0 705.8L230 836.9M0 711.5L230 842.6M0 717.2L230 848.3M0 722.9L230 854M0 728.6L230 859.7M0 734.3L230 865.4M0 740L230 871.1M0 745.7L230 876.8M0 751.4L230 882.5M0 757.1L230 888.2M0 762.8L230 893.9M0 768.5L230 899.6M0 774.2L230 905.3M0 779.9L230 911M0 785.6L230 916.7M0 791.3L230 922.4M0 797L230 928.1M0 802.7L230 933.8" stroke="#fff" stroke-width="1.45" stroke-linecap="butt"/></g>
<path d="M68.3 455v124M72.3 455v126M163.3 508v140M167.3 513v138" stroke="#fff" stroke-width="1.1"/><path d="M70.3 453v128M165.3 506v145" stroke="#111" stroke-width="1.7"/>
<path d="M204.5 549v148M204.5 549c2 2 4 5 6 9l12 24M187.5 539c4 6 10 8 16 5M48 432c4 8 12 14 22 17 4 1 8 0 11-4M10.5 412v136M13.5 418v130" stroke-width="1.1"/>
<path d="M14 538l56 28M74 568c24 10 46 24 62 42 10 12 18 24 27 34M76 578c22 9 42 22 58 40" stroke="#fff" stroke-width="1.6"/>
<path d="M12 545l58 26M73 573c24 10 46 24 62 42 10 12 18 24 27 34" stroke="#111" stroke-width=".9"/>
<ellipse cx="214" cy="580.7" rx="3" ry="4.6" fill="#fff"/><ellipse cx="214.3" cy="581" rx="1.5" ry="2.6" fill="#333"/>
<path d="M0 663L12.5 657.5L16.3 660L16.7 678.8L0 688.5" fill="#fff" stroke-width="1.9"/><path d="M0 667L13 661.5V677L0 684" stroke-width="1"/>
</g>
<g font-family="Liberation Sans,sans-serif" font-size="15.8" fill="#161616" stroke="#161616" stroke-width=".65" text-anchor="middle" clip-path="url(#dclip)">
<text x="351" y="232">41</text>
<text x="405" y="227">16</text>
<text x="467.5" y="241">20</text>
<text x="459" y="294">21</text>
<text x="530" y="296">17</text>
<text x="567" y="291.5">18</text>
<text x="557.5" y="333.5">17</text>
<text x="508" y="367">24</text>
<text x="318.5" y="258">23</text>
<text x="282" y="276">27</text>
<text x="327" y="322">29</text>
<text x="307.5" y="372">28</text>
<text x="47" y="402">25</text>
<text x="73" y="437">30</text>
<text x="188.5" y="466">28</text>
<text x="180" y="513">27</text>
<text x="556.5" y="445.5">39</text>
<text x="477" y="494">36</text>
<text x="600" y="513">38</text>
<text x="631.5" y="503.5">40</text>
<text x="496.5" y="569">35</text>
<text x="501" y="639.5">37</text>
<text x="513" y="682.5">46</text>
<text x="430" y="722.5">47</text>
<text x="610" y="659.5">48</text>
<text x="258" y="633">42</text>
<text x="339" y="622.5" fill="#4a0e0e" stroke="#4a0e0e" stroke-width=".8">44</text>
<text x="-1" y="721" text-anchor="start" font-size="16.2" stroke-width=".4" textLength="69.5" lengthAdjust="spacingAndGlyphs">1300-E070</text>
<text x="-18" y="682" text-anchor="start" font-size="21" font-weight="bold" stroke-width=".3" textLength="29.5" lengthAdjust="spacingAndGlyphs" transform="skewY(-20)">FWD</text>
</g>
</svg>
<!--DG-END-->

<!-- ============ PARTS TABLE ============ -->
<!--PT-START-->
<div class="abs" style="left:720px;top:217px;width:1183px;height:468px;background:#fff;overflow:hidden">
<div class="abs" style="left:0;top:26px;width:1183px;height:25px;background:#f6f6f6"></div>
<div class="abs" style="left:0;top:51px;width:1183px;height:25px;background:#fff"></div>
<div class="abs" style="left:0;top:76px;width:1183px;height:25px;background:#f6f6f6"></div>
<div class="abs" style="left:0;top:101px;width:1183px;height:25px;background:#fff"></div>
<div class="abs" style="left:0;top:126px;width:1183px;height:25px;background:#f6f6f6"></div>
<div class="abs" style="left:0;top:151px;width:1183px;height:25px;background:#fff"></div>
<div class="abs" style="left:0;top:176px;width:1183px;height:25px;background:#f6f6f6"></div>
<div class="abs" style="left:0;top:201px;width:1183px;height:25px;background:#fff"></div>
<div class="abs" style="left:0;top:226px;width:1183px;height:25px;background:#f6f6f6"></div>
<div class="abs" style="left:0;top:251px;width:1183px;height:25px;background:#fff"></div>
<div class="abs" style="left:0;top:276px;width:1183px;height:25px;background:#f6f6f6"></div>
<div class="abs" style="left:0;top:301px;width:1183px;height:25px;background:#fcc0cb"></div>
<div class="abs" style="left:0;top:326px;width:1183px;height:25px;background:#f6f6f6"></div>
<div class="abs" style="left:0;top:351px;width:1183px;height:25px;background:#fff"></div>
<div class="abs" style="left:0;top:376px;width:1183px;height:25px;background:#f6f6f6"></div>
<div class="abs" style="left:0;top:401px;width:1183px;height:25px;background:#fff"></div>
<div class="abs" style="left:0;top:426px;width:1183px;height:25px;background:#f6f6f6"></div>
<div class="abs" style="left:0;top:451px;width:1183px;height:25px;background:#fff"></div>
<div class="abs hdr" style="left:0;top:0;width:1183px;height:26px"></div>
<div class="vl" style="left:26px;top:0;height:468px"></div>
<div class="vl" style="left:156px;top:0;height:468px"></div>
<div class="vl" style="left:346px;top:0;height:468px"></div>
<div class="vl" style="left:381px;top:0;height:468px"></div>
<div class="vl" style="left:441px;top:0;height:468px"></div>
<div class="vl" style="left:506px;top:0;height:468px"></div>
<div class="t hb" style="left:8px;top:0">No.</div>
<div class="t hb" style="left:33px;top:0">部品番号</div>
<div class="t hb" style="left:163px;top:0">部品名称</div>
<div class="t hb" style="left:353px;top:0">個数</div>
<div class="t hb" style="left:388px;top:0">ニュース</div>
<div class="t hb" style="left:450px;top:0">適用号機</div>
<div class="t hb" style="left:513px;top:0">備考</div>
<div class="t" style="left:9px;top:26px">33</div>
<div class="t" style="left:33px;top:26px">95807-06012</div>
<div class="t k" style="left:163px;top:26px">ボルト,フランジ</div>
<div class="t" style="left:346px;width:33px;text-align:right;top:26px">2</div>
<div class="t" style="left:9px;top:51px">34</div>
<div class="t" style="left:33px;top:51px">90450-35001</div>
<div class="t k" style="left:163px;top:51px">ホースクランプアセンブリ</div>
<div class="t" style="left:346px;width:33px;text-align:right;top:51px">1</div>
<div class="t" style="left:9px;top:76px">35</div>
<div class="t" style="left:33px;top:76px">2D1-12551-00</div>
<div class="t k" style="left:163px;top:76px">ホース<span style="letter-spacing:.6px"> </span>7</div>
<div class="t" style="left:346px;width:33px;text-align:right;top:76px">1</div>
<div class="t" style="left:9px;top:101px">36</div>
<div class="t" style="left:33px;top:101px">90450-35001</div>
<div class="t k" style="left:163px;top:101px">ホースクランプアセンブリ</div>
<div class="t" style="left:346px;width:33px;text-align:right;top:101px">1</div>
<div class="t" style="left:9px;top:126px">37</div>
<div class="t" style="left:33px;top:126px">90450-32001</div>
<div class="t k" style="left:163px;top:126px">ホースクランプアセンブリ</div>
<div class="t" style="left:346px;width:33px;text-align:right;top:126px">1</div>
<div class="t" style="left:9px;top:151px">38</div>
<div class="t" style="left:33px;top:151px">2D1-12589-00</div>
<div class="t k" style="left:163px;top:151px">ホース<span style="letter-spacing:.6px"> </span>6</div>
<div class="t" style="left:346px;width:33px;text-align:right;top:151px">1</div>
<div class="t" style="left:9px;top:176px">39</div>
<div class="t" style="left:33px;top:176px">90450-22017</div>
<div class="t k" style="left:163px;top:176px">ホースクランプアセンブリ</div>
<div class="t" style="left:346px;width:33px;text-align:right;top:176px">1</div>
<div class="t" style="left:9px;top:201px">40</div>
<div class="t" style="left:33px;top:201px">90464-23002</div>
<div class="t k" style="left:163px;top:201px">クランプ</div>
<div class="t" style="left:346px;width:33px;text-align:right;top:201px">1</div>
<div class="t" style="left:9px;top:226px">41</div>
<div class="t" style="left:33px;top:226px">90467-11090</div>
<div class="t k" style="left:163px;top:226px">クリップ</div>
<div class="t" style="left:346px;width:33px;text-align:right;top:226px">1</div>
<div class="t" style="left:9px;top:251px">42</div>
<div class="t" style="left:33px;top:251px">2D1-12467-00</div>
<div class="t k" style="left:163px;top:251px">カバー,ラジエタ</div>
<div class="t" style="left:346px;width:33px;text-align:right;top:251px">1</div>
<div class="t" style="left:9px;top:276px">43</div>
<div class="t" style="left:33px;top:276px">90111-06031</div>
<div class="t k" style="left:163px;top:276px">ボルト</div>
<div class="t" style="left:346px;width:33px;text-align:right;top:276px">2</div>
<div class="t" style="left:9px;top:301px">44</div>
<div class="t" style="left:33px;top:301px">3C3-1240J-00-P0</div>
<div class="t k" style="left:163px;top:301px">ラジエタカバーアツシイ<span style="letter-spacing:.6px"> </span>1</div>
<div class="t" style="left:346px;width:33px;text-align:right;top:301px">1</div>
<div class="t" style="left:9px;top:326px">45</div>
<div class="t" style="left:33px;top:326px">3C3-1240K-00-P0</div>
<div class="t k" style="left:163px;top:326px">ラジエタカバーアツシイ<span style="letter-spacing:.6px"> </span>2</div>
<div class="t" style="left:346px;width:33px;text-align:right;top:326px">1</div>
<div class="t" style="left:9px;top:351px">46</div>
<div class="t" style="left:33px;top:351px">90111-06080</div>
<div class="t k" style="left:163px;top:351px">ボルト</div>
<div class="t" style="left:346px;width:33px;text-align:right;top:351px">2</div>
<div class="t" style="left:9px;top:376px">47</div>
<div class="t" style="left:33px;top:376px">90111-06079</div>
<div class="t k" style="left:163px;top:376px">ボルト</div>
<div class="t" style="left:346px;width:33px;text-align:right;top:376px">2</div>
<div class="t" style="left:9px;top:401px">48</div>
<div class="t" style="left:33px;top:401px">90467-200A0</div>
<div class="t k" style="left:163px;top:401px">クリップ</div>
<div class="t" style="left:346px;width:33px;text-align:right;top:401px">1</div>
</div>
<!--PT-END-->

<!-- ============ LOWER PANELS ============ -->
<!--LW-START-->
<div class="abs" style="left:698px;top:217px;width:16px;height:574px;background:linear-gradient(90deg,#8f8f8f,#c8c8c8 40%,#dcdcdc);border-left:1px solid #888"></div>
<div class="abs sbtn" style="left:699px;top:217px;width:15px;height:15px"></div>
<div class="abs sbtn" style="left:699px;top:775px;width:15px;height:15px"></div>
<div class="abs" style="left:699px;top:490px;width:14px;height:285px;border:1px solid #8a8a8a;border-radius:3px;background:linear-gradient(90deg,#fff,#f0f0f0 50%,#d2d2d2)"></div>
<div class="abs" style="left:714px;top:217px;width:6px;height:589px;background:#868686"></div>
<div class="abs" style="left:714px;top:482px;width:7px;height:59px;background:linear-gradient(#fff,#d8d8d8);border:1px solid #999"></div>
<div class="abs" style="left:0;top:791px;width:698px;height:15px;background:linear-gradient(#8f8f8f,#c8c8c8 40%,#dcdcdc);border-top:1px solid #888"></div>
<div class="abs sbtn" style="left:0;top:792px;width:15px;height:14px"></div>
<div class="abs sbtn" style="left:683px;top:792px;width:15px;height:14px"></div>
<div class="abs" style="left:96px;top:792px;width:587px;height:13px;border:1px solid #8a8a8a;border-radius:3px;background:linear-gradient(#fff,#f0f0f0 50%,#d2d2d2)"></div>
<div class="abs" style="left:698px;top:791px;width:16px;height:15px;background:#fff"></div>
<div class="abs" style="left:1903px;top:217px;width:1px;height:468px;background:#ccc"></div>
<div class="abs" style="left:1904px;top:217px;width:16px;height:26px;background:#fafafa"></div>
<div class="abs" style="left:1904px;top:243px;width:15px;height:442px;background:linear-gradient(90deg,#8f8f8f,#c8c8c8 40%,#dcdcdc)"></div>
<div class="abs sbtn" style="left:1904px;top:244px;width:14px;height:15px"></div>
<div class="abs sbtn" style="left:1904px;top:669px;width:14px;height:15px"></div>
<div class="abs" style="left:1904px;top:524px;width:13px;height:145px;border:1px solid #8a8a8a;border-radius:3px;background:linear-gradient(90deg,#fff,#f0f0f0 50%,#d2d2d2)"></div>
<div class="abs" style="left:1918px;top:217px;width:2px;height:590px;background:#e4e4e4"></div>
<div class="abs" style="left:720px;top:685px;width:1200px;height:7px;background:#868686"></div>
<div class="abs" style="left:1290px;top:686px;width:60px;height:6px;background:linear-gradient(#fff,#dcdcdc);border:1px solid #aaa;border-top:0"></div>
<div class="abs" style="left:720px;top:692px;width:1200px;height:114px;background:#fff"></div>
<div class="abs" style="left:720px;top:692px;width:1200px;height:7px;background:#fafafa;border-bottom:1px solid #d4d4d4"></div>
<div class="abs" style="left:720px;top:699px;width:1200px;height:25px;background:#f6f6f6"></div>
<div class="abs" style="left:720px;top:749px;width:1200px;height:25px;background:#f6f6f6"></div>
<div class="abs" style="left:720px;top:799px;width:1200px;height:7px;background:#f6f6f6"></div>
<div class="vl" style="left:1321px;top:692px;height:114px"></div>
<div class="abs" style="left:0;top:806px;width:1920px;height:42px;background:#999"></div>
<div class="abs" style="left:0;top:806px;width:1920px;height:6px;background:#888"></div>
<div class="abs" style="left:930px;top:806px;width:60px;height:6px;background:linear-gradient(#fff,#dcdcdc);border:1px solid #aaa;border-top:0"></div>
<div class="abs" style="left:7px;top:818px;color:#fff;font-weight:bold;font-size:12px;line-height:24px;letter-spacing:.6px">項目数</div>
<div class="abs" style="left:115px;top:818px;color:#fff;font-weight:bold;font-size:12px;line-height:24px">1</div>
<div class="abs" style="left:1377px;top:818px;width:209px;height:25px;background:#fff;border:1px solid #bbb;color:#c41a1a;font-size:12px;line-height:23px;padding-left:9px;white-space:nowrap;letter-spacing:.1px">2019/02/15 10:13 <span style="letter-spacing:-.9px">現在の価格です。</span></div>
<div class="abs" style="left:1598px;top:818px;width:76px;height:25px;border:1px solid #8a8a8a;border-radius:3px;background:linear-gradient(#fff,#ededed 50%,#d9d9d9);font-weight:bold;font-size:12px;line-height:23px;text-align:center;color:#111;letter-spacing:.5px;box-shadow:0 1px 1px rgba(0,0,0,.3)">価格表示</div>
<div class="abs" style="left:0;top:848px;width:1920px;height:172px;background:#fff"></div>
<div class="abs" style="left:0;top:924px;width:1920px;height:25px;background:#f6f6f6"></div>
<div class="abs" style="left:0;top:974px;width:1920px;height:25px;background:#f6f6f6"></div>
<div class="abs hdr" style="left:0;top:848px;width:1920px;height:26px"></div>
<div class="abs" style="left:0;top:874px;width:1920px;height:25px;background:#0047ab"></div>
<div class="vl" style="left:0px;top:848px;height:172px"></div>
<div class="vl" style="left:101px;top:848px;height:172px"></div>
<div class="vl" style="left:391px;top:848px;height:172px"></div>
<div class="vl" style="left:521px;top:848px;height:172px"></div>
<div class="vl" style="left:341px;top:848px;height:26px"></div>
<div class="vl" style="left:341px;top:874px;height:146px;background:#000"></div>
<div class="t hb" style="left:7px;top:848px">部品番号</div>
<div class="t hb" style="left:107px;top:848px">部品名称</div>
<div class="t hb" style="left:528px;top:848px">備考</div>
<div class="t hb" style="left:341px;width:47px;text-align:right;top:848px">個数</div>
<div class="t hb" style="left:391px;width:128px;text-align:right;top:848px;letter-spacing:.35px">希望小売価格(税込)</div>
<div class="t" style="left:7px;top:874px;color:#fff;width:92px;overflow:hidden;letter-spacing:.32px">3C3-1240J-00-P0</div>
<div class="t k" style="left:107px;top:874px;color:#fff">ラジエタカバーアツシイ<span style="letter-spacing:.6px"> </span>1</div>
<div class="t" style="left:341px;width:46px;text-align:right;top:874px;color:#fff">1</div>
<div class="t" style="left:391px;width:127px;text-align:right;top:874px;color:#fff">6,718</div>
<!--LW-END-->

<!--ICONS-START-->
<svg style="left:0;top:0" width="1920" height="1080" viewBox="0 0 1920 1080">
<!-- trash -->
<defs><linearGradient id="tg" x1="0" x2="1" y1="0" y2="0"><stop offset="0" stop-color="#c8c8c8"/><stop offset=".45" stop-color="#f4f4f4"/><stop offset=".8" stop-color="#bdbdbd"/><stop offset="1" stop-color="#808080"/></linearGradient>
<linearGradient id="pg" x1="0" x2="0" y1="0" y2="1"><stop offset="0" stop-color="#fafafa"/><stop offset="1" stop-color="#cfcfcf"/></linearGradient></defs>
<rect x="1741" y="817.500" width="4" height="2.500" fill="#ddd" stroke="#111" stroke-width=".9"/>
<path d="M1731.500 823.500l1.500-4h20l1.500 4z" fill="#f0f0f0" stroke="#111" stroke-width="1"/>
<path d="M1732.500 824h21.500v18.500c0 1.500-1 2.500-2.500 2.500h-16.500c-1.500 0-2.500-1-2.500-2.500z" fill="url(#tg)" stroke="#111" stroke-width="1.100"/>
<path d="M1736.500 824v21M1740.700 824v21M1745.200 824v21M1749.500 824v21" stroke="#111" stroke-width="1.100"/>
<!-- printer -->
<rect x="1780.500" y="817" width="15" height="9" fill="#f6f6f2"/>
<rect x="1775.500" y="825" width="25" height="17" rx="2.500" fill="url(#pg)"/>
<rect x="1777.500" y="821" width="3" height="4" fill="#f2f2f2"/><rect x="1796" y="821" width="3" height="4" fill="#e6e6e6"/>
<rect x="1781" y="826" width="14" height="6.500" fill="#cfe4fb"/><rect x="1782" y="827" width="12" height="4.500" fill="#3f7fe0"/>
<rect x="1779" y="837" width="18" height="1.800" fill="#1a1a1a"/><rect x="1780" y="839" width="16" height="5" fill="#fff"/>
<!-- scrollbar arrows -->
<g fill="#111">
<path d="M703 227.500h7l-3.500-4zM703 780.500h7l-3.500 4zM1907.500 254h7l-3.500-4zM1907.500 674.500h7l-3.500 4z"/>
<path d="M9.500 795.500v7l-4-3.500zM688.500 795.500v7l4-3.500z"/>
<path d="M1316.500 686.500h7l-3.500 3.500zM956.500 811h7l-3.500-3.500z" fill="#333"/>
<path d="M715.500 508v8l3.500-4z" fill="#333"/>
</g>
<g stroke="#888" stroke-width="1">
<path d="M385.500 795v6M387.500 795v6M389.500 795v6M391.500 795v6M393.500 795v6"/>
<path d="M702.500 628.500h6M702.500 630.500h6M702.500 632.500h6M702.500 634.500h6M702.500 636.500h6"/>
<path d="M1908 592.500h5M1908 594.500h5M1908 596.500h5M1908 598.500h5M1908 600.500h5"/>
</g>
</svg>
<!--ICONS-END-->
<!-- ============ FOOTER + TASKBAR ============ -->
<div class="abs" style="left:0;top:1020px;width:1920px;height:20px;background:#333"></div>
<div class="abs" style="left:12px;top:1020px;color:#fff;font-family:'DejaVu Sans','Liberation Sans',sans-serif;font-size:10.800px;line-height:20px;white-space:nowrap;letter-spacing:.25px" id="copy">Copyright(C) 2014 PRESTO CORPORATION All Rights reserved.</div>
<div class="abs" style="left:0;top:1040px;width:1920px;height:40px;background:#0b1018"></div>
<div class="abs" style="left:48px;top:1040px;width:344px;height:40px;background:#f2f2f2"></div>
<div class="abs" style="left:395px;top:1040px;width:45px;height:40px;background:#2d3239"></div>
<div class="abs" style="left:395px;top:1078px;width:45px;height:2px;background:#76b9ed"></div>
<div class="abs" style="left:448px;top:1078px;width:40px;height:2px;background:#76b9ed"></div>
<div class="abs" style="left:742px;top:1078px;width:40px;height:2px;background:#76b9ed"></div>
<div class="abs" style="left:791px;top:1078px;width:40px;height:2px;background:#76b9ed"></div>
<div class="abs" style="left:88px;top:1046px;font-size:14.500px;color:#4a4a4a;line-height:28px;white-space:nowrap;letter-spacing:-2.050px">ここに入力して検索</div>
<div class="abs" style="left:1819px;top:1043px;font-size:11.800px;color:#fff;line-height:16px;white-space:nowrap;letter-spacing:-.2px">10:14</div>
<div class="abs" style="left:1803px;top:1061px;font-size:11.800px;color:#fff;line-height:16px;white-space:nowrap;letter-spacing:-.4px">2019/02/15</div>
<div class="abs" style="left:1505px;top:1047px;font-size:21px;color:#fff;line-height:24px;font-weight:normal;transform:scaleX(.86);transform-origin:0 0">A</div>
<div class="abs" style="left:1780px;top:1047px;font-size:21px;color:#fff;line-height:24px;transform:scaleX(.86);transform-origin:0 0">A</div>
<svg style="left:0;top:1040px" width="1920" height="40" viewBox="0 1040 1920 40">
<!-- start -->
<path d="M16 1054.200l6.500-.9v6.300h-6.500zM23.300 1053.200l8.700-1.200v7.600h-8.700zM16 1060.400h6.500v6.300l-6.500-.9zM23.300 1060.400h8.700v7.600l-8.700-1.200z" fill="#fff"/>
<circle cx="68" cy="1060" r="8.200" fill="none" stroke="#1a1a1a" stroke-width="2.600"/>
<g fill="none" stroke="#333" stroke-width="1.200"><rect x="368.500" y="1052.500" width="5" height="10" rx="2.500"/><path d="M366 1060c0 3 2 5 5 5s5-2 5-5M371 1065v3M368.500 1068.500h5"/></g>
<!-- edge -->
<path d="M407 1060.500c.3-6 4.500-10 10.500-10 6.500 0 10.500 4.500 10.500 10.500v2h-15c.3 3 2.700 4.700 6 4.700 2.700 0 5-.7 7.500-2.200v5c-2.500 1.400-5.500 2-8.700 2-7 0-11-4.200-11-10 0-4 2-7.300 6-9-2 1.700-3.500 4.300-3.700 7h9.600c0-3-1.700-5.300-5.200-5.300-2.700 0-5 1.500-6.500 4.800z" fill="#1e8ae6"/>
<!-- folder -->
<path d="M456.500 1052h8l2 2h12.500v16h-22.500z" fill="#f6d36b"/><path d="M456.500 1056h22.500v14h-22.500z" fill="#fbe48f"/><path d="M461 1063h14v7h-14z" fill="#3f9fdc"/><path d="M464 1066h8v4h-8z" fill="#fbe48f"/>
<!-- store -->
<path d="M506 1055h20v15h-20z" fill="#fff"/><path d="M511.500 1055c0-7 9-7 9 0" fill="none" stroke="#fff" stroke-width="1.300"/>
<rect x="511" y="1058" width="4.500" height="4.500" fill="#f25022"/><rect x="516.500" y="1058" width="4.500" height="4.500" fill="#7fba00"/><rect x="511" y="1063.500" width="4.500" height="4.500" fill="#00a4ef"/><rect x="516.500" y="1063.500" width="4.500" height="4.500" fill="#ffb900"/>
<!-- media -->
<path d="M555 1052l20 1v16l-20 1z" fill="#6aa3d4"/><path d="M558 1053l15 1v13l-15 1z" fill="#8cc0ea"/><circle cx="565" cy="1060.500" r="6.500" fill="#f08a24"/><path d="M563 1057l5.500 3.500-5.500 3.500z" fill="#fff"/>
<!-- chrome -->
<path d="M604.970 1054.500A11 11 0 0 1 624.030 1054.500L614.500 1060z" fill="#db4437"/><path d="M624.030 1054.500A11 11 0 0 1 614.500 1071L614.500 1060z" fill="#ffcd40"/><path d="M614.500 1071A11 11 0 0 1 604.970 1054.500L614.500 1060z" fill="#0f9d58"/><path d="M614.500 1055h9.800" stroke="#db4437" stroke-width="1"/><circle cx="614.500" cy="1060" r="5.200" fill="#fff"/><circle cx="614.500" cy="1060" r="4.100" fill="#4285f4"/>
<!-- acrobat -->
<rect x="653" y="1049" width="22" height="22" rx="1.500" fill="#c8141a"/><path d="M657 1067c2-1 5-6 6.500-11 .6-2.200-1.600-2.500-1.600-.5.200 3.500 4 8 8.600 8 1.800-.2 1.300-1.700-.3-1.700-3.500 0-9.500 2-13.200 5.200z" fill="none" stroke="#fff" stroke-width="1.100"/>
<!-- mail -->
<path d="M701 1058l12-7.500 12 7.500v12h-24z" fill="#fff"/><path d="M701.500 1058.500h23l-9 5.500 3 2" fill="none" stroke="#0b1018" stroke-width="1.400"/>
<!-- access -->
<path d="M751 1051l11-2v22l-11-2z" fill="#a4373a"/><path d="M760 1052h11v17h-11z" fill="#b8474a"/><ellipse cx="766.500" cy="1054" rx="5" ry="2.200" fill="#f0d0d0"/><path d="M761.500 1058c0 3 10 3 10 0M761.500 1062c0 3 10 3 10 0M761.500 1066c0 3 10 3 10 0" fill="none" stroke="#f0d0d0" stroke-width="1.200"/>
<text x="753" y="1065" font-family="Liberation Sans,sans-serif" font-weight="bold" font-size="11" fill="#fff">A</text>
<!-- photos -->
<rect x="800" y="1050" width="21" height="21" fill="#fff"/><path d="M801 1069l7.500-11 4.500 6 2.500-3 4.500 8z" fill="#0b1018"/>
<!-- tray -->
<rect x="1481" y="1051" width="15" height="14" fill="#fff"/><circle cx="1488.500" cy="1058" r="6" fill="#111"/>
<text x="1486" y="1062.500" font-family="Liberation Serif,serif" font-size="11" fill="#fff">J</text>
<path d="M1525 1056h14l-1.500 9h-11z" fill="#f2b544"/><path d="M1527 1053l8 6" stroke="#d43a2a" stroke-width="2"/><circle cx="1537" cy="1052.500" r="2.200" fill="#3b86d6"/>
<rect x="1545" y="1051" width="9" height="10" fill="#dfe6ee"/><circle cx="1554" cy="1059" r="4.300" fill="#5aa0e0" stroke="#2c5d9c" stroke-width="1.200"/><path d="M1550.500 1062.500l-4 4" stroke="#2c5d9c" stroke-width="2"/>
<path d="M1563.500 1056l9-4 7.500 3v9l-8 4-8.500-4z" fill="#f0b24a"/><path d="M1563.500 1058.500l8.500 3.500 8-3.500" fill="none" stroke="#a8701a" stroke-width="1"/><rect x="1569" y="1054" width="6" height="3" fill="#888"/>
<g fill="none" stroke="#fff" stroke-width="1.200">
<circle cx="1659" cy="1054.500" r="2.800"/><path d="M1654.500 1063c.5-5 8.500-5 9 0"/><circle cx="1652" cy="1059" r="2.300"/><path d="M1648 1067c.4-4.500 7.600-4.500 8 0"/>
<path d="M1685 1063l6-6 6 6" stroke-width="1.400"/>
<path d="M1711 1064a12 12 0 0 1 12-12M1714 1065a9 9 0 0 1 9-9M1717.500 1065.500a5.500 5.500 0 0 1 5.500-5.500" stroke="#ccc"/><circle cx="1722" cy="1065" r="1.300" fill="#fff" stroke="none"/>
<path d="M1731 1056.500h3l4-3.500v13l-4-3.500h-3z"/><path d="M1740.500 1056.500c1.500 1.800 1.500 4.200 0 6M1743 1054.500c2.600 3 2.600 7 0 10M1745.500 1052.500c3.800 4.500 3.800 9.500 0 14"/>
</g>
<path d="M1759.500 1052l3.500 2.300-3.500 2.300-3.500-2.300zM1766.500 1052l3.500 2.300-3.500 2.300-3.500-2.300zM1759.500 1057.300l3.500 2.300-3.500 2.300-3.500-2.300zM1766.500 1057.300l3.500 2.300-3.500 2.300-3.500-2.300zM1763 1062l3.500 2.200-3.500 2.300-3.500-2.300z" fill="#fff"/>
<path d="M1879.500 1052.500h15v11h-10l-3 3v-3h-2z" fill="#fff"/><path d="M1882 1055.500h10M1882 1058h10M1882 1060.500h7" stroke="#0b1018" stroke-width="1"/>
<circle cx="1894.500" cy="1067" r="6.500" fill="#2b2f36" stroke="#777" stroke-width="1"/>
<text x="1894.500" y="1071" text-anchor="middle" font-family="Liberation Sans,sans-serif" font-weight="bold" font-size="10.500" fill="#fff">3</text>
<path d="M1915.500 1040v40" stroke="#555" stroke-width="1"/>
</svg>

</body>
</html>
